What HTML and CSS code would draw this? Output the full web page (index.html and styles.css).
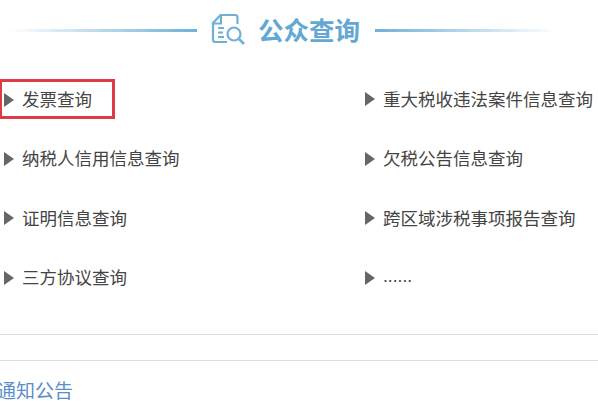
FILE: index.html
```html
<!DOCTYPE html>
<html lang="zh-CN">
<head>
    <meta charset="UTF-8">
    <title>公众查询</title>
    <link rel="stylesheet" href="styles.css">
</head>
<body>

    <!-- 标题 -->
    <div class="title-row">
        <span class="title-line line-left"></span>
        <svg class="title-icon" width="36" height="32" viewBox="0 0 36 32" fill="none" stroke="#6fb1d6" stroke-width="2.2">
            <path d="M16 29H4.500Q2 29 2 26.500V10L9.500 2H24Q26.500 2 26.500 4.500V11"/>
            <path d="M2 10.500H10V2.500"/>
            <path d="M7 15H13M7 19.500H12M7 24H13"/>
            <circle cx="23" cy="21" r="6.500"/>
            <path d="M28 26L33 31" stroke-width="2.600"/>
        </svg>
        <span class="title-text">公众查询</span>
        <span class="title-line line-right"></span>
    </div>

    <!-- 查询列表 -->
    <div class="query-list">
        <div class="query-item highlight"><span class="arrow"></span>发票查询</div>
        <div class="query-item"><span class="arrow"></span>重大税收违法案件信息查询</div>
        <div class="query-item"><span class="arrow"></span>纳税人信用信息查询</div>
        <div class="query-item"><span class="arrow"></span>欠税公告信息查询</div>
        <div class="query-item"><span class="arrow"></span>证明信息查询</div>
        <div class="query-item"><span class="arrow"></span>跨区域涉税事项报告查询</div>
        <div class="query-item"><span class="arrow"></span>三方协议查询</div>
        <div class="query-item"><span class="arrow"></span>......</div>
    </div>

    <!-- 通知公告 -->
    <div class="divider first"></div>
    <div class="divider second"></div>
    <div class="notice-title">通知公告</div>

</body>
</html>
```

FILE: styles.css
```css
html, body {
    height: 401px;
    overflow: hidden;
}
body {
    margin: 0;
    background: #fff;
    font-family: "Liberation Sans", "Noto Sans CJK SC", sans-serif;
}
.title-row {
    display: flex;
    align-items: center;
    height: 60px;
    padding-left: 8px;
}
.title-line {
    height: 3px;
}
.line-left {
    width: 189px;
    background: linear-gradient(to right, #fff, #6fb1d6);
}
.line-right {
    width: 182px;
    background: linear-gradient(to right, #6fb1d6, #fff);
}
.title-icon {
    margin: 0 11px 2px 14px;
}
.title-text {
    width: 102px;
    margin: 0 15px 3px 0;
    font-size: 25.500px;
    font-weight: bold;
    color: #62a8d2;
    white-space: nowrap;
}
.query-list {
    display: grid;
    grid-template-columns: 361px 1fr;
    grid-auto-rows: 59.500px;
    margin-top: 8.500px;
}
.query-item {
    display: flex;
    align-items: center;
    padding-left: 4px;
    font-size: 17.500px;
    color: #444;
    white-space: nowrap;
}
.query-item.highlight {
    width: 115px;
    height: 40px;
    margin-top: 10px;
    box-sizing: border-box;
    padding-left: 2px;
    border: 3px solid #dc3c42;
    border-left-width: 2px;
}
.arrow {
    width: 0;
    height: 0;
    margin: 2px 8px 0 0;
    border-top: 7px solid transparent;
    border-bottom: 7px solid transparent;
    border-left: 10px solid #666;
}
.divider {
    height: 1px;
    background: #ddd;
}
.divider.first {
    margin-top: 27.500px;
}
.divider.second {
    margin-top: 25px;
}
.notice-title {
    margin: 20px 0 0 -3px;
    font-size: 19px;
    line-height: 22px;
    color: #5b8fcb;
}
```
